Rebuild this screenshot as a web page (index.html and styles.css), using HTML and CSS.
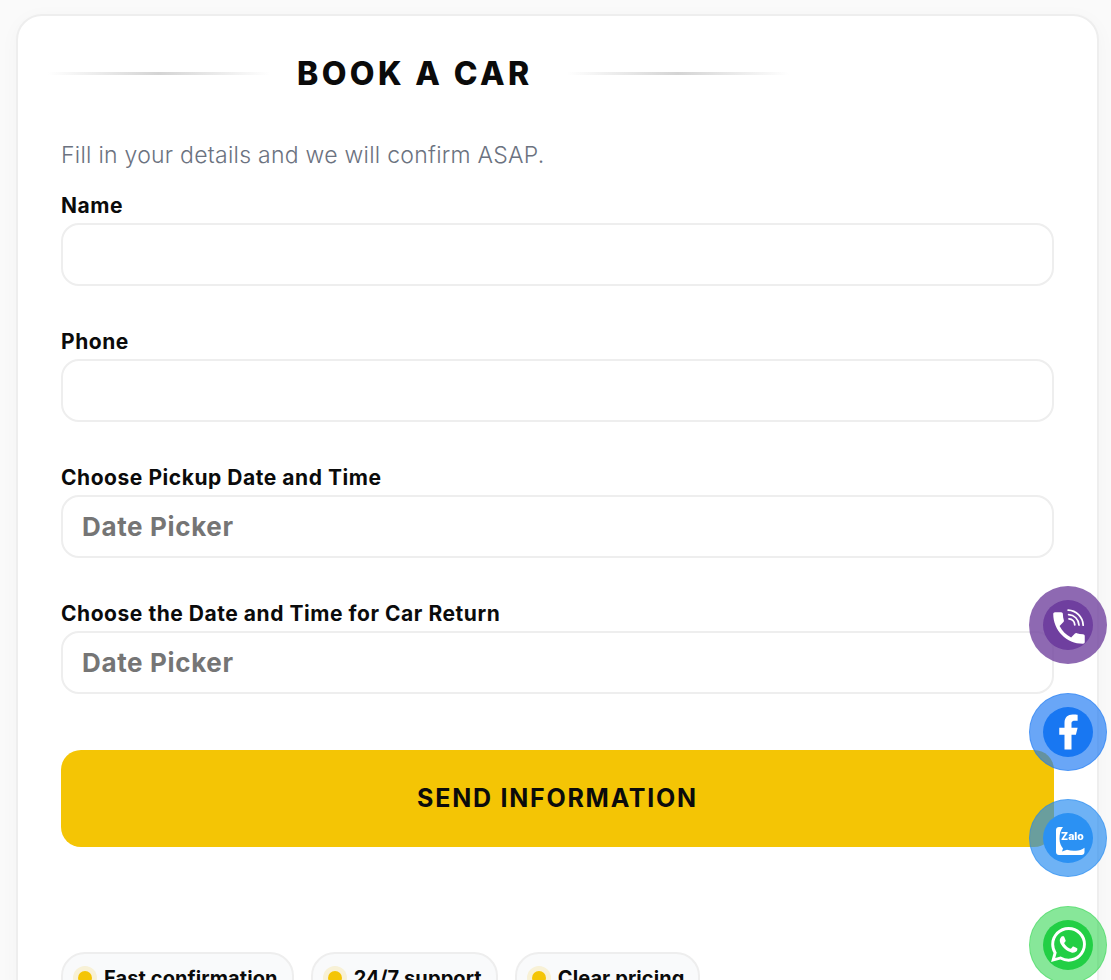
FILE: index.html
```html
<!DOCTYPE html>
<html>
<head>
    <title>Book a Car</title>
    <meta name="viewport" content="width=device-width, initial-scale=1">
    <link rel="stylesheet" href="styles.css">
</head>
<body>
    <div class="card">
        <div class="title-row">
            <span class="title-line"></span>
            <h1>BOOK A CAR</h1>
            <span class="title-line"></span>
        </div>
        <p class="intro">Fill in your details and we will confirm ASAP.</p>
        <form>
            <div class="form-group">
                <label for="name">Name</label>
                <input type="text" id="name">
            </div>
            <div class="form-group">
                <label for="phone">Phone</label>
                <input type="text" id="phone">
            </div>
            <div class="form-group">
                <label for="pickup">Choose Pickup Date and Time</label>
                <input type="text" id="pickup" placeholder="Date Picker">
            </div>
            <div class="form-group">
                <label for="return">Choose the Date and Time for Car Return</label>
                <input type="text" id="return" placeholder="Date Picker">
            </div>
            <button type="button" class="send">SEND INFORMATION</button>
        </form>
        <div class="chips">
            <span class="chip"><i class="dot"></i>Fast confirmation</span>
            <span class="chip"><i class="dot"></i>24/7 support</span>
            <span class="chip"><i class="dot"></i>Clear pricing</span>
        </div>
    </div>

    <div class="floats">
        <a class="float viber">
            <span class="float-inner">
                <svg class="viber-icon" viewBox="0 0 24 24" width="42" height="42">
                    <path fill="#fff" d="M6.62 10.79c1.44 2.83 3.76 5.14 6.59 6.59l2.2-2.2c.27-.27.67-.36 1.02-.24 1.12.37 2.33.57 3.57.57.55 0 1 .45 1 1V20c0 .55-.45 1-1 1-9.39 0-17-7.61-17-17 0-.55.45-1 1-1h3.5c.55 0 1 .45 1 1 0 1.25.2 2.45.57 3.57.11.35.03.74-.25 1.02l-2.2 2.2z"/>
                    <path fill="none" stroke="#fff" stroke-width="1" stroke-linecap="round" d="M11.500 1.800c4.600.2 8.400 3.900 8.600 8.600M11.800 4.300c3.200.2 5.700 2.700 5.900 6M12 6.800c1.800.1 3.200 1.500 3.300 3.400"/>
                </svg>
            </span>
        </a>
        <a class="float facebook">
            <span class="float-inner">
                <svg viewBox="0 0 24 24" width="42" height="42">
                    <path fill="#fff" d="M14 13.5h2.5l1-4H14v-2c0-1.03 0-2 2-2h1.5V2.14c-.326-.043-1.557-.14-2.857-.14C11.928 2 10 3.657 10 6.7v2.8H7v4h3V22h4v-8.5z"/>
                </svg>
            </span>
        </a>
        <a class="float zalo">
            <span class="float-inner">
                <svg class="zalo-bubble" viewBox="0 0 29 28" width="29" height="28">
                    <path fill="#fff" d="M3 0h4C4.500 3 3.500 7 3.500 12c0 4 1.500 7 3.500 9.500l-1 3 5-1.800c3 1 6 1.300 9 1 3-.2 6-1 8.500-3V25c0 1.700-1.300 3-3 3H3c-1.700 0-3-1.300-3-3V3C0 1.300 1.300 0 3 0z"/>
                </svg>
                <span class="zalo-text">Zalo</span>
            </span>
        </a>
        <a class="float whatsapp">
            <span class="float-inner">
                <svg viewBox="0 0 24 24" width="35" height="35">
                    <path fill="#fff" d="M17.472 14.382c-.297-.149-1.758-.867-2.03-.967-.273-.099-.471-.148-.67.15-.197.297-.767.966-.94 1.164-.173.199-.347.223-.644.075-.297-.15-1.255-.463-2.39-1.475-.883-.788-1.48-1.761-1.653-2.059-.173-.297-.018-.458.13-.606.134-.133.298-.347.446-.52.149-.174.198-.298.298-.497.099-.198.05-.371-.025-.52-.075-.149-.669-1.612-.916-2.207-.242-.579-.487-.5-.669-.51-.173-.008-.371-.01-.57-.01-.198 0-.52.074-.792.372-.272.297-1.04 1.016-1.04 2.479 0 1.462 1.065 2.875 1.213 3.074.149.198 2.096 3.2 5.077 4.487.709.306 1.262.489 1.694.625.712.227 1.36.195 1.871.118.571-.085 1.758-.719 2.006-1.413.248-.694.248-1.289.173-1.413-.074-.124-.272-.198-.57-.347m-5.421 7.403h-.004a9.87 9.87 0 01-5.031-1.378l-.361-.214-3.741.982.998-3.648-.235-.374a9.86 9.86 0 01-1.51-5.26c.001-5.45 4.436-9.884 9.888-9.884 2.64 0 5.122 1.03 6.988 2.898a9.825 9.825 0 012.893 6.994c-.003 5.45-4.437 9.884-9.885 9.884m8.413-18.297A11.815 11.815 0 0012.05 0C5.495 0 .16 5.335.157 11.892c0 2.096.547 4.142 1.588 5.945L.057 24l6.305-1.654a11.882 11.882 0 005.683 1.448h.005c6.554 0 11.89-5.335 11.893-11.893a11.821 11.821 0 00-3.48-8.413z"/>
                </svg>
            </span>
        </a>
    </div>
</body>
</html>
```

FILE: styles.css
```css
html, body {
    height: 980px;
    overflow: hidden;
}
body {
    font-family: Inter, "Liberation Sans", sans-serif;
    margin: 0;
    padding: 14px 12px 0 16px;
    background-color: #fafafa;
    color: #0b0b0b;
}
.card {
    background-color: white;
    border: 2px solid #eeeeee;
    border-radius: 26px;
    padding: 38px 43px 0;
    box-shadow: 0 4px 20px rgba(0,0,0,0.03);
}
.title-row {
    display: flex;
    align-items: center;
    height: 40px;
    margin-left: -13px;
}
.title-row h1 {
    margin: 0 34px 0 27px;
    font-size: 32px;
    font-weight: 800;
    letter-spacing: 3.4px;
    line-height: 40px;
    white-space: nowrap;
}
.title-line {
    width: 222px;
    height: 3px;
    margin-top: -1px;
    background: linear-gradient(90deg, transparent, #d4d4d4, transparent);
}
.intro {
    margin: 46px 0 0;
    font-size: 23px;
    line-height: 30px;
    font-weight: 300;
    letter-spacing: 0.26px;
    color: #6b7280;
}
.form-group {
    margin-bottom: 43px;
}
form {
    margin-top: 23px;
}
label {
    display: block;
    font-size: 21px;
    font-weight: 700;
    letter-spacing: 0.54px;
    line-height: 26px;
    margin-bottom: 4px;
}
input {
    display: block;
    width: 100%;
    height: 63px;
    padding: 0 19px;
    border: 2px solid #eeeeee;
    border-radius: 18px;
    box-sizing: border-box;
    background: white;
    font-family: inherit;
    font-size: 26px;
    font-weight: 700;
    letter-spacing: 0.65px;
}
input::placeholder {
    color: #757575;
    opacity: 1;
}
.send {
    display: block;
    width: 100%;
    height: 97px;
    margin-top: 56px;
    padding: 0 0 2px;
    border: none;
    border-radius: 20px;
    background-color: #f4c505;
    color: #0b0b0b;
    font-family: inherit;
    font-size: 25px;
    font-weight: 700;
    letter-spacing: 1.75px;
}
.chips {
    display: flex;
    gap: 17px;
    margin-top: 105px;
}
.chip {
    display: flex;
    align-items: center;
    gap: 12px;
    height: 48px;
    padding: 0 14px 0 15px;
    border: 2px solid #eeeeee;
    border-radius: 24px;
    background-color: #f9fafb;
    font-size: 20px;
    font-weight: 700;
    letter-spacing: 0.1px;
    white-space: nowrap;
}
.dot {
    width: 14px;
    height: 14px;
    border-radius: 50%;
    background-color: #f4c505;
    box-shadow: 0 0 0 5px rgba(244,197,5,0.15);
}
.floats {
    position: fixed;
    top: 586px;
    right: 4px;
    display: flex;
    flex-direction: column;
    gap: 28.67px;
}
.float {
    display: flex;
    align-items: center;
    justify-content: center;
    width: 78px;
    height: 78px;
    border-radius: 50%;
    box-sizing: border-box;
}
.float-inner {
    position: relative;
    display: flex;
    align-items: center;
    justify-content: center;
    width: 50px;
    height: 50px;
    border-radius: 50%;
}
.viber { background-color: rgba(114,67,159,0.8); }
.viber .float-inner { background-color: #6f3f9f; }
.viber-icon { transform: translate(1px, 3px); }
.facebook { background-color: rgba(24,119,242,0.65); border: 1px solid rgba(24,119,242,0.4); }
.facebook .float-inner { background-color: #1877f2; }
.zalo { background-color: rgba(33,136,240,0.65); border: 1px solid rgba(33,136,240,0.4); }
.zalo .float-inner { background-color: #2b91f3; }
.whatsapp { background-color: rgba(37,211,70,0.55); border: 1px solid rgba(37,211,70,0.35); }
.whatsapp .float-inner { background-color: #22cf45; }
.zalo-bubble {
    position: absolute;
    top: 14px;
    left: 13px;
}
.zalo-text {
    position: absolute;
    top: 17px;
    left: 18px;
    color: white;
    font-size: 10.5px;
    line-height: 14px;
    font-weight: 800;
}
```
